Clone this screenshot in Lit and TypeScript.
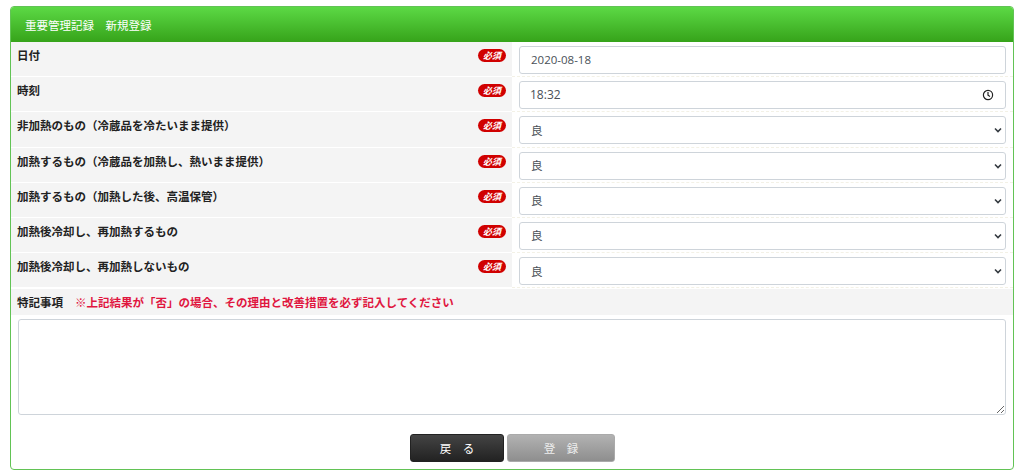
import { LitElement, html, css } from "lit";
import { customElement } from "lit/decorators.js";

const rows = [
  "非加熱のもの（冷蔵品を冷たいまま提供）",
  "加熱するもの（冷蔵品を加熱し、熱いまま提供）",
  "加熱するもの（加熱した後、高温保管）",
  "加熱後冷却し、再加熱するもの",
  "加熱後冷却し、再加熱しないもの",
];

@customElement("app-root")
export class AppRoot extends LitElement {
  static styles = css`
    :host {
      display: block;
      font-family: "Open Sans", "Noto Sans CJK JP", sans-serif;
      color: #212529;
      padding: 6px 10px 5px;
      box-sizing: border-box;
      height: 475px;
      background: #fff;
    }
    * { box-sizing: border-box; }
    .card {
      height: 464px;
      border: 1px solid #62c355;
      border-radius: 4px;
      background: #fff;
      overflow: hidden;
    }
    .head {
      height: 35px;
      padding: 0 14px;
      display: flex;
      align-items: center;
      color: #fff;
      font-size: 11.5px;
      background: linear-gradient(#5cd945, #36a31a);
    }
    .row {
      display: grid;
      grid-template-columns: 501px 501px;
      height: 35.2px;
    }
    .label {
      background: #f4f4f4;
      padding: 5px 6px 0;
      display: flex;
      justify-content: space-between;
      align-items: flex-start;
      font-size: 11.5px;
      font-weight: 700;
      line-height: 17px;
      color: #222;
      border-bottom: 1px solid #fff;
    }
    .badge {
      flex: none;
      width: 28px;
      height: 13px;
      margin: 2px 0 0;
      border-radius: 7px;
      background: #d00000;
      color: #fff;
      font-size: 9px;
      font-style: italic;
      line-height: 13px;
      font-weight: 700;
      text-align: center;
    }
    .value {
      padding: 4px 7px 0 7px;
      border-bottom: 1px dashed #f3f1e6;
    }
    .field { position: relative; }
    .clock {
      position: absolute;
      right: 12px;
      top: 8px;
      width: 12px;
      height: 12px;
      pointer-events: none;
    }
    .ctl {
      display: block;
      width: 100%;
      height: 28px;
      border: 1px solid #ced4da;
      border-radius: 3px;
      background: #fff;
      color: #495057;
      font: 11.5px "Open Sans", "Noto Sans CJK JP", sans-serif;
      padding: 0 11px 2px;
      outline: none;
    }
    .time { font-size: 12px; padding-left: 10px; }
    select.ctl {
      appearance: none;
      padding: 0 11px;
      background: #fff url("data:image/svg+xml;utf8,<svg xmlns='http://www.w3.org/2000/svg' width='8' height='6' viewBox='0 0 8 6'><path d='M1 1.5l3 3 3-3' fill='none' stroke='%23343a40' stroke-width='1.6'/></svg>") no-repeat right 3px center;
    }
    .note {
      height: 26px;
      margin-top: 1px;
      padding: 0 6px;
      background: #f4f4f4;
      display: flex;
      align-items: center;
      font-size: 11.5px;
      font-weight: 700;
      color: #222;
    }
    .warn { color: #e0163f; margin-left: 12px; }
    .area { padding: 4px 7px 0; }
    textarea.ctl { height: 96px; resize: vertical; }
    .buttons {
      display: flex;
      justify-content: center;
      gap: 3px;
      margin-top: 19px;
      padding-left: 1px;
    }
    button {
      height: 28px;
      border-radius: 3px;
      color: #fff;
      font: 11.5px "Open Sans", "Noto Sans CJK JP", sans-serif;
      padding: 0;
    }
    .back {
      width: 94px;
      border: 1px solid #222;
      background: linear-gradient(#444, #222);
    }
    .save {
      width: 108px;
      border: 1px solid #aaa;
      background: linear-gradient(#b2b2b2, #8e8e8e);
      color: #eee;
    }
  `;

  private label(text: string) {
    return html`<div class="label"><span>${text}</span><span class="badge">必須</span></div>`;
  }

  render() {
    return html`
      <div class="card">
        <div class="head">重要管理記録　新規登録</div>
        <div class="row">
          ${this.label("日付")}
          <div class="value"><input class="ctl" type="text" value="2020-08-18" /></div>
        </div>
        <div class="row">
          ${this.label("時刻")}
          <div class="value">
            <div class="field">
              <input class="ctl time" type="text" value="18:32" />
              <svg class="clock" viewBox="0 0 12 12" fill="none" stroke="#222" stroke-width="1.2">
                <circle cx="6" cy="6" r="4.6"></circle>
                <path d="M6 3v3.2l2 1.2"></path>
              </svg>
            </div>
          </div>
        </div>
        ${rows.map(
          (r) => html`<div class="row">
            ${this.label(r)}
            <div class="value"><select class="ctl"><option>良</option><option>否</option></select></div>
          </div>`
        )}
        <div class="note">特記事項<span class="warn">※上記結果が「否」の場合、その理由と改善措置を必ず記入してください</span></div>
        <div class="area"><textarea class="ctl"></textarea></div>
        <div class="buttons">
          <button class="back">戻　る</button>
          <button class="save">登　録</button>
        </div>
      </div>
    `;
  }
}
